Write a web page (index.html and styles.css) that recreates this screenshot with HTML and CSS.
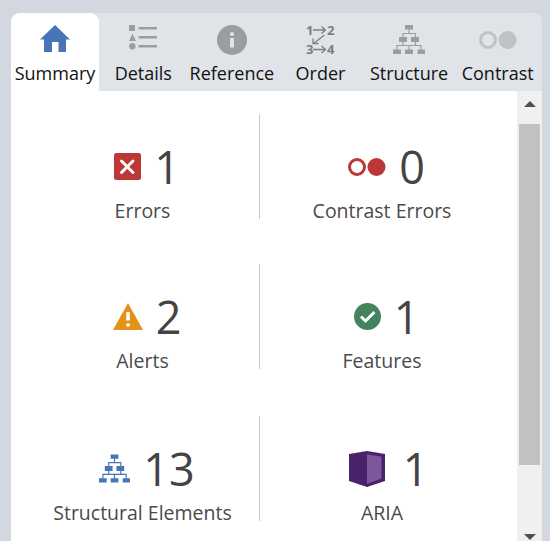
FILE: index.html
```html
<!DOCTYPE html>
<html lang="en">
<head>
<meta charset="utf-8">
<title>Summary</title>
<link rel="stylesheet" href="styles.css">
</head>
<body>
<svg class="defs" width="0" height="0" aria-hidden="true">
  <symbol id="tree" viewBox="0 0 32 29">
    <path d="M12 0h8v4.500h-8zM6 12h8v5H6zM18 12h8v5h-8zM0 24.500h8v4.500H0zM12 24.500h8v4.500h-8zM24.500 24.500h7.500v4.500h-7.500z" fill="currentColor"/>
    <path d="M16 4v4.500M10 12V8.500h12.500V12M10 17v3.500M22.500 17v3.500M4 25v-4.500h24V25M16 20.500V25" fill="none" stroke="currentColor" stroke-width="1.200"/>
  </symbol>
  <symbol id="circles" viewBox="0 0 38 18">
    <circle cx="9" cy="9" r="7.500" fill="none" stroke="currentColor" stroke-width="3"/>
    <circle cx="28.500" cy="9" r="9" fill="currentColor"/>
  </symbol>
</svg>
<main class="panel">
  <nav class="tabs">
    <a class="tab active"><span class="glyph"><svg class="blue" width="30" height="27" viewBox="0 0 30 27"><path d="M15 0 30 14.500H26V27H18.500V17H12V27H4V14.500H0z" fill="currentColor"/></svg></span>Summary</a>
    <a class="tab"><span class="glyph details"><svg class="gray" width="28" height="25" viewBox="0 0 28 25"><path d="M0 0h6v6H0zM3.500 8.500 7 16H0zM9.500 2h18.500v2.500H9.500zM9.500 11h18.500v2.500H9.500zM9.500 20h18.500v2.500H9.500z" fill="currentColor"/><circle cx="3.300" cy="21.300" r="3.200" fill="currentColor"/></svg></span>Details</a>
    <a class="tab"><span class="glyph"><svg class="gray" width="30" height="30" viewBox="0 0 30 30"><circle cx="15" cy="15" r="15" fill="currentColor"/><circle cx="15" cy="9" r="2" fill="#e0e3e8"/><path d="M13 13h4v9.500h-4z" fill="#e0e3e8"/></svg></span>Reference</a>
    <a class="tab"><span class="glyph order"><svg width="36" height="44" viewBox="-4 -8 36 44"><g class="digits"><text x="0" y="9.500">1</text><text x="21" y="9.500">2</text><text x="0" y="29">3</text><text x="21" y="29">4</text></g><path d="M7 5h12M15.500 1.500 19.500 5l-4 3.500M7 24.500h12M15.500 21l4 3.500-4 3.500M18.500 10 7.500 18.500M7 13.500v5h5.500" fill="none" stroke="#7d7f81" stroke-width="1.300"/></svg></span>Order</a>
    <a class="tab"><span class="glyph"><svg class="gray" width="32" height="29"><use href="#tree"/></svg></span>Structure</a>
    <a class="tab"><span class="glyph contrast"><svg class="faded" width="38" height="18"><use href="#circles"/></svg></span>Contrast</a>
  </nav>
  <div class="body">
    <section class="stats">
      <div class="stat"><div class="count"><svg width="27" height="27" viewBox="0 0 27 27"><rect width="27" height="27" rx="2.500" fill="#bd3737"/><path d="m7.500 8 11.500 11.500M19 8 7.500 19.500" stroke="#fff" stroke-width="3" stroke-linecap="round"/></svg><span>1</span></div><div class="label">Errors</div></div>
      <div class="stat"><div class="count"><svg class="red" width="38" height="18"><use href="#circles"/></svg><span>0</span></div><div class="label">Contrast Errors</div></div>
      <div class="stat"><div class="count"><svg width="30" height="27" viewBox="0 0 30 27"><path d="m15 0 15 27H0z" fill="#e39119"/><path d="M13.300 9h3.500v8.500h-3.500zM13.300 20.500h3.500v3h-3.500z" fill="#fff"/></svg><span>2</span></div><div class="label">Alerts</div></div>
      <div class="stat"><div class="count"><svg width="27" height="27" viewBox="0 0 27 27"><circle cx="13.500" cy="13.500" r="13.500" fill="#43845e"/><path d="m7 13.500 4.500 4.500 9-9" fill="none" stroke="#fff" stroke-width="3"/></svg><span>1</span></div><div class="label">Features</div></div>
      <div class="stat"><div class="count"><svg class="blue" width="31" height="29"><use href="#tree"/></svg><span>13</span></div><div class="label">Structural Elements</div></div>
      <div class="stat"><div class="count aria"><svg width="36" height="36" viewBox="0 0 36 36"><path d="M0 3 18 0 36 3V30L18 36 0 30z" fill="#48236b"/><path d="m18 3.500 14.500 2v22L18 33z" fill="#7d579a"/></svg><span>1</span></div><div class="label">ARIA</div></div>
    </section>
    <div class="scrollbar">
      <svg width="12" height="6" viewBox="0 0 12 6"><path d="m6 0 6 6H0z" fill="#505050"/></svg>
      <div class="thumb"></div>
      <svg class="down" width="12" height="6" viewBox="0 0 12 6"><path d="M0 0h12L6 6z" fill="#505050"/></svg>
    </div>
  </div>
</main>
</body>
</html>
```

FILE: styles.css
```css
* { box-sizing: border-box; }
body {
  margin: 0;
  height: 541px;
  padding: 13px 8px 0 11px;
  overflow: hidden;
  background: #d3d8e0;
  font-family: "Open Sans", sans-serif;
}
svg { display: block; flex: none; }
.defs { position: absolute; }
.panel {
  height: 528px;
  overflow: hidden;
  border-radius: 9px 9px 0 0;
  background: #fff;
}
.tabs {
  display: grid;
  grid-template-columns: 88px repeat(5, 88.6px);
  height: 78px;
  background: #e0e3e8;
}
.tab {
  display: flex;
  flex-direction: column;
  align-items: center;
  font-size: 18px;
  line-height: 26px;
  color: #111;
  white-space: nowrap;
}
.active { background: #fff; border-top-right-radius: 9px; }
.glyph { height: 47px; padding-top: 12px; }
.order { padding-top: 4px; }
.contrast { padding-top: 18px; }
.blue { color: #4676b8; }
.gray { color: #9b9ea1; }
.faded { color: #bfc2c6; }
.red { color: #bd3737; }
.digits { font-size: 13px; font-weight: 700; fill: #7d7f81; }
.body { display: flex; height: 450px; }
.stats {
  flex: 1;
  display: grid;
  grid-template-columns: 234px 244px;
  grid-template-rows: 150px 152px 105px;
  padding: 23px 13px 0 15px;
}
.stat { height: 105px; padding-top: 22px; text-align: center; }
.stat:nth-child(odd) { border-right: 1px solid #c8c8ca; }
.count {
  display: flex;
  align-items: center;
  justify-content: center;
  gap: 13px;
  height: 61px;
  padding-left: 9px;
  font-size: 45px;
  line-height: 60px;
  color: #444;
}
.aria { gap: 18px; padding-left: 13px; }
.label { font-size: 19.500px; line-height: 28px; color: #4a4a4a; white-space: nowrap; }
.scrollbar {
  display: flex;
  flex-direction: column;
  align-items: center;
  width: 25px;
  padding: 10px 0 1px;
  background: #f0f0f0;
}
.thumb { width: 21px; height: 341px; margin-top: 17px; background: #c1c1c1; }
.down { margin-top: auto; }
```
